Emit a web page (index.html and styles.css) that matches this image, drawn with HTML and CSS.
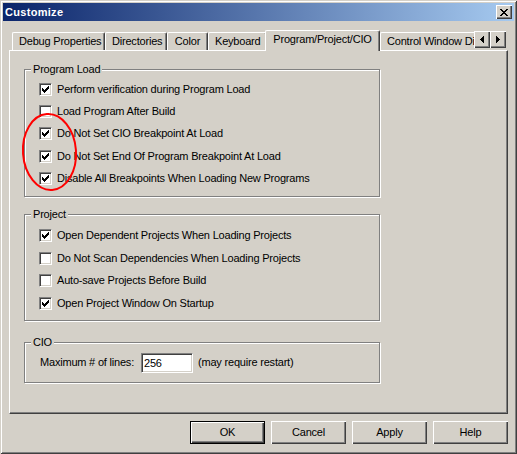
FILE: index.html
```html
<!DOCTYPE html>
<html lang="en">
<head>
    <meta charset="UTF-8">
    <meta name="viewport" content="width=device-width, initial-scale=1.0">
    <title>Customize</title>
    <link rel="stylesheet" href="styles.css">
</head>
<body>
    <div class="window">
        <!-- Title bar -->
        <div class="titlebar">
            <span class="title">Customize</span>
            <span class="caption-btn">
                <svg width="8" height="7" viewBox="0 0 8 7"><path d="M0 0h2v1H0zM6 0h2v1H6zM1 1h2v1H1zM5 1h2v1H5zM2 2h4v1H2zM3 3h2v1H3zM2 4h4v1H2zM1 5h2v1H1zM5 5h2v1H5zM0 6h2v1H0zM6 6h2v1H6z"/></svg>
            </span>
        </div>

        <div class="dialog">
            <!-- Tabs -->
            <div class="tabstrip">
                <div class="tabs">
                    <div class="tab tab-debug">Debug Properties</div>
                    <div class="tab tab-dirs">Directories</div>
                    <div class="tab tab-color">Color</div>
                    <div class="tab tab-keys">Keyboard</div>
                    <div class="tab tab-selected">Program/Project/CIO</div>
                    <div class="tab">Control Window Display</div>
                </div>
                <div class="tab-scroll">
                    <span class="scroll-btn">
                        <svg width="4" height="7" viewBox="0 0 4 7"><path d="M0 3h1v1H0zM1 2h1v3H1zM2 1h1v5H2zM3 0h1v7H3z"/></svg>
                    </span>
                    <span class="scroll-btn">
                        <svg width="4" height="7" viewBox="0 0 4 7"><path d="M0 0h1v7H0zM1 1h1v5H1zM2 2h1v3H2zM3 3h1v1H3z"/></svg>
                    </span>
                </div>
            </div>

            <div class="panel">
                <!-- Program Load -->
                <fieldset class="group group-load">
                    <legend>Program Load</legend>
                    <div class="option"><span class="checkbox"><svg width="9" height="9" viewBox="0 0 9 9"><path d="M1 3h1v3H1zM2 4h1v3H2zM3 5h1v3H3zM4 4h1v3H4zM5 3h1v3H5zM6 2h1v3H6zM7 1h1v3H7z"/></svg></span>Perform verification during Program Load</div>
                    <div class="option"><span class="checkbox"></span>Load Program After Build</div>
                    <div class="option"><span class="checkbox"><svg width="9" height="9" viewBox="0 0 9 9"><path d="M1 3h1v3H1zM2 4h1v3H2zM3 5h1v3H3zM4 4h1v3H4zM5 3h1v3H5zM6 2h1v3H6zM7 1h1v3H7z"/></svg></span>Do Not Set CIO Breakpoint At Load</div>
                    <div class="option"><span class="checkbox"><svg width="9" height="9" viewBox="0 0 9 9"><path d="M1 3h1v3H1zM2 4h1v3H2zM3 5h1v3H3zM4 4h1v3H4zM5 3h1v3H5zM6 2h1v3H6zM7 1h1v3H7z"/></svg></span>Do Not Set End Of Program Breakpoint At Load</div>
                    <div class="option"><span class="checkbox"><svg width="9" height="9" viewBox="0 0 9 9"><path d="M1 3h1v3H1zM2 4h1v3H2zM3 5h1v3H3zM4 4h1v3H4zM5 3h1v3H5zM6 2h1v3H6zM7 1h1v3H7z"/></svg></span>Disable All Breakpoints When Loading New Programs</div>
                </fieldset>

                <!-- Project -->
                <fieldset class="group group-project">
                    <legend>Project</legend>
                    <div class="option"><span class="checkbox"><svg width="9" height="9" viewBox="0 0 9 9"><path d="M1 3h1v3H1zM2 4h1v3H2zM3 5h1v3H3zM4 4h1v3H4zM5 3h1v3H5zM6 2h1v3H6zM7 1h1v3H7z"/></svg></span>Open Dependent Projects When Loading Projects</div>
                    <div class="option"><span class="checkbox"></span>Do Not Scan Dependencies When Loading Projects</div>
                    <div class="option"><span class="checkbox"></span>Auto-save Projects Before Build</div>
                    <div class="option"><span class="checkbox"><svg width="9" height="9" viewBox="0 0 9 9"><path d="M1 3h1v3H1zM2 4h1v3H2zM3 5h1v3H3zM4 4h1v3H4zM5 3h1v3H5zM6 2h1v3H6zM7 1h1v3H7z"/></svg></span>Open Project Window On Startup</div>
                </fieldset>

                <!-- CIO -->
                <fieldset class="group group-cio">
                    <legend>CIO</legend>
                    <div class="field-row">
                        <span class="field-label">Maximum # of lines:</span>
                        <input class="edit" type="text" value="256" readonly>
                        <span>(may require restart)</span>
                    </div>
                </fieldset>
            </div>

            <div class="buttons">
                <button class="btn btn-default">OK</button>
                <button class="btn">Cancel</button>
                <button class="btn">Apply</button>
                <button class="btn">Help</button>
            </div>
        </div>

        <!-- red annotation circle -->
        <svg class="annotation" width="517" height="454" viewBox="0 0 517 454">
            <ellipse cx="49.5" cy="152" rx="26.5" ry="38" transform="rotate(-4 49.5 152)" fill="none" stroke="#ff0000" stroke-width="2"/>
        </svg>
    </div>
</body>
</html>
```

FILE: styles.css
```css
* {
    box-sizing: border-box;
}

body {
    margin: 0;
    background-color: #d4d0c8;
    color: #000;
    font-family: "Liberation Sans", Arial, sans-serif;
    font-size: 11px;
    line-height: 13px;
    letter-spacing: -0.2px;
}

.window {
    position: relative;
    width: 517px;
    height: 454px;
    padding: 3px;
    background-color: #d4d0c8;
    box-shadow: inset 1px 1px 0 #d4d0c8, inset -1px -1px 0 #404040, inset 2px 2px 0 #fff, inset -2px -2px 0 #808080;
}

.titlebar {
    display: flex;
    align-items: center;
    justify-content: space-between;
    height: 18px;
    padding: 0 2px;
    background: linear-gradient(to right, #0a246a, #a6caf0);
    color: #fff;
    font-weight: bold;
    letter-spacing: 0.3px;
}

.caption-btn {
    display: flex;
    align-items: center;
    justify-content: center;
    width: 16px;
    height: 14px;
    background-color: #d4d0c8;
    box-shadow: inset 1px 1px 0 #fff, inset -1px -1px 0 #404040, inset -2px -2px 0 #808080;
}

.dialog {
    padding: 9px 6px 0;
}

/* tabs */
.tabstrip {
    position: relative;
    z-index: 1;
    display: flex;
    height: 21px;
    margin-bottom: -1px;
}

.tabs {
    display: flex;
    align-items: flex-start;
    width: 465px;
    height: 21px;
    padding-left: 3px;
    overflow: hidden;
}

.tab {
    flex: none;
    height: 18px;
    margin-top: 2px;
    padding: 0 6px;
    line-height: 17px;
    white-space: nowrap;
    text-align: center;
    background-color: #d4d0c8;
    border: 1px solid;
    border-bottom: 0;
    border-color: #fff #404040 #fff #fff;
    border-radius: 2px 2px 0 0;
    box-shadow: inset -1px 0 0 #808080;
}

.tab-debug { width: 93px; }
.tab-dirs { width: 62px; }
.tab-color { width: 41px; }
.tab-keys { width: 59px; }

.tab-selected {
    position: relative;
    width: 115px;
    height: 21px;
    margin-top: 0;
    margin-left: -2px;
    padding-bottom: 3px;
}

.tab-scroll {
    display: flex;
    margin-top: 1px;
}

.scroll-btn {
    display: flex;
    align-items: center;
    justify-content: center;
    width: 16px;
    height: 17px;
    background-color: #d4d0c8;
    box-shadow: inset 1px 1px 0 #fff, inset -1px -1px 0 #404040, inset -2px -2px 0 #808080;
}

.panel {
    height: 364px;
    padding: 12px 0 0 14px;
    border: 1px solid;
    border-color: #fff #404040 #404040 #fff;
    box-shadow: inset -1px -1px 0 #808080;
}

/* group boxes */
.group {
    width: 356px;
    min-width: 0;
    margin: 0;
    padding: 3px 0 5px;
    border: 1px solid #808080;
    box-shadow: inset 1px 1px 0 #fff, 1px 1px 0 #fff;
}

.group legend {
    margin-left: 6px;
    padding: 0 2px;
    line-height: 13px;
    background-color: #d4d0c8;
}

.group-load {
    padding: 2px 0 6px;
}

.group-load .option {
    height: 22.4px;
}

.group-project {
    margin-top: 11px;
}

.group-cio {
    margin-top: 15px;
    padding: 4px 0 9px;
}

.option {
    display: flex;
    align-items: center;
    height: 22.75px;
    padding-left: 14px;
    white-space: nowrap;
}

.checkbox {
    flex: none;
    width: 13px;
    height: 13px;
    margin-right: 5px;
    background-color: #fff;
    border: 1px solid;
    border-color: #808080 #fff #fff #808080;
    box-shadow: inset 1px 1px 0 #404040, inset -1px -1px 0 #d4d0c8;
}

.checkbox svg {
    display: block;
    margin: 1px;
}

.field-row {
    display: flex;
    align-items: center;
    height: 20px;
    padding-left: 15px;
    white-space: nowrap;
}

.field-label {
    width: 101px;
}

.edit {
    width: 52px;
    height: 20px;
    margin: 0 5px 0 0;
    padding: 0 0 0 2px;
    font: inherit;
    letter-spacing: inherit;
    color: #000;
    background-color: #fff;
    border: 1px solid;
    border-color: #808080 #fff #fff #808080;
    box-shadow: inset 1px 1px 0 #404040, inset -1px -1px 0 #d4d0c8;
    outline: none;
}

/* dialog buttons */
.buttons {
    display: flex;
    justify-content: flex-end;
    gap: 6px;
    margin-top: 7px;
}

.btn {
    width: 75px;
    height: 23px;
    padding: 0;
    font: inherit;
    letter-spacing: inherit;
    color: #000;
    background-color: #d4d0c8;
    border: 0;
    box-shadow: inset 1px 1px 0 #fff, inset -1px -1px 0 #404040, inset -2px -2px 0 #808080;
}

.btn-default {
    border: 1px solid #000;
}

.annotation {
    position: absolute;
    left: 0;
    top: 0;
    pointer-events: none;
}
```
